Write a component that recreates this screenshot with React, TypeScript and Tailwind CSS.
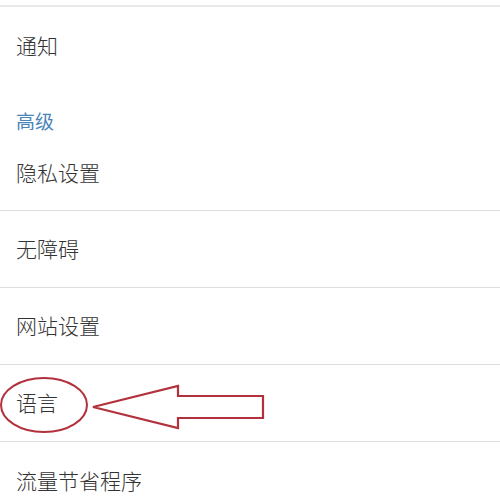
const rows = ["无障碍", "网站设置"];

function Annotation() {
  return (
    <svg
      className="pointer-events-none absolute left-0 top-0"
      width="280"
      height="76"
      viewBox="0 0 280 76"
      fill="none"
    >
      <ellipse cx="44" cy="40" rx="43" ry="27" stroke="#b2313c" strokeWidth="2" />
      <polygon
        points="93,42 178,21 178,31 263,31 263,53 178,53 178,63"
        stroke="#b2313c"
        strokeWidth="2.2"
        strokeLinejoin="miter"
      />
    </svg>
  );
}

export default function App() {
  return (
    <div className="h-[496px] w-[500px] overflow-hidden bg-white font-light text-[#333333] [font-family:'Noto_Sans_CJK_SC','Noto_Sans',sans-serif]">
      <div className="h-[5px]" />
      <div className="h-[2px] bg-[#e9e9e9]" />
      <div className="flex h-[78px] items-center px-4 text-[21px]">通知</div>
      <div className="h-[48px] px-4 pt-[26px] text-[19px] font-normal leading-[20px] text-[#4a84b9]">高级</div>
      <div className="flex h-[77px] items-center px-4 pt-[2px] text-[21px]">隐私设置</div>
      {rows.map((label) => (
        <div key={label} className="border-t border-[#dedede]">
          <div className="flex h-[76px] items-center px-4 text-[21px]">{label}</div>
        </div>
      ))}
      <div className="relative border-t border-[#dedede]">
        <div className="flex h-[76px] items-center px-4 text-[21px]">语言</div>
        <Annotation />
      </div>
      <div className="border-t border-[#dedede]">
        <div className="flex h-[80px] items-center px-4 pb-[2px] text-[21px]">流量节省程序</div>
      </div>
    </div>
  );
}
